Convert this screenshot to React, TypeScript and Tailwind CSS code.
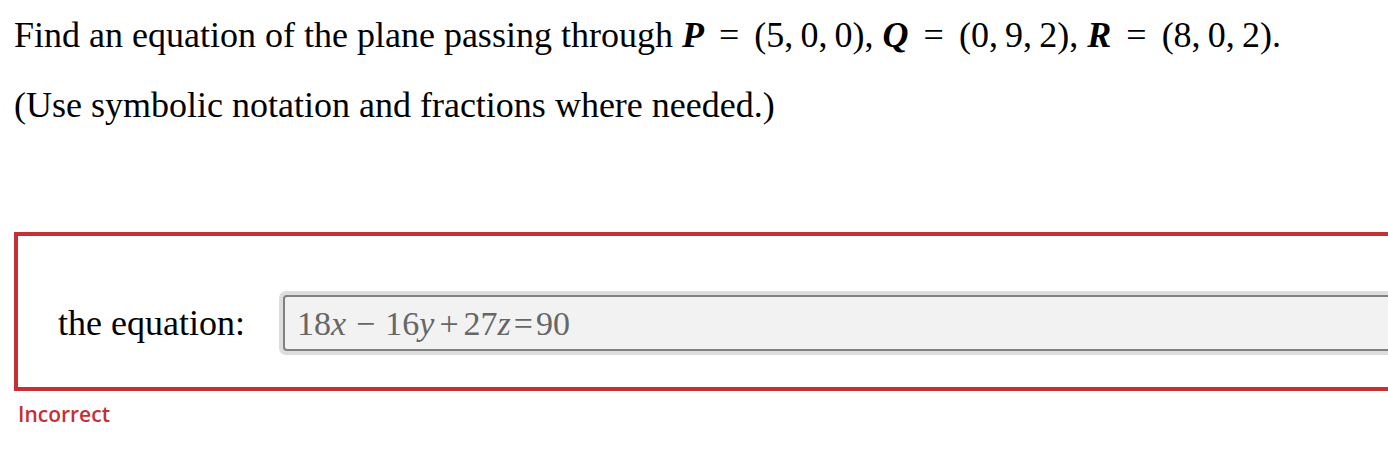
import React from 'react';

const serif = { fontFamily: '"Liberation Serif", "Times New Roman", serif' };

const Pt = ({ name, coords }: { name: string; coords: string }) => (
  <span className="whitespace-nowrap">
    <span className="italic font-bold">{name}</span>
    <span className="mx-[15px]">=</span>
    {coords}
  </span>
);

export default function App() {
  return (
    <div className="w-full overflow-hidden bg-white text-black" style={serif}>
      <div className="pl-[14px] pt-[15px]">
        <p className="text-[36px] leading-[40px] whitespace-nowrap">
          Find an equation of the plane passing through <Pt name="P" coords="(5,&#8201;0,&#8201;0)" />,{' '}
          <Pt name="Q" coords="(0,&#8201;9,&#8201;2)" />, <Pt name="R" coords="(8,&#8201;0,&#8201;2)" />.
        </p>
        <p className="mt-[30px] text-[36px] leading-[40px]">(Use symbolic notation and fractions where needed.)</p>

        {/* answer box */}
        <div className="mt-[107px] w-[1420px] h-[159px] border-4 border-[#c43034] pl-[40px] pt-[55px]">
          <div className="flex items-center">
            <span className="text-[36px] leading-[40px] w-[221px] shrink-0">the equation:</span>
            <div className="flex-1 p-[4px] bg-[#dddddd] rounded-[7px]">
              <div className="h-[56px] border-2 border-[#808080] rounded-[4px] bg-[#f2f2f2] flex items-center pl-[12px] text-[34px] text-[#666666]">
                <span>18<i>x</i></span>
                <span className="mx-[10px]">&minus;</span>
                <span>16<i>y</i></span>
                <span className="mx-[5px]">+</span>
                <span>27<i>z</i></span>
                <span className="mx-[3px]">=</span>
                <span>90</span>
              </div>
            </div>
          </div>
        </div>

        <div
          className="mt-[8px] pl-[4px] text-[21px] font-semibold text-[#c43034]"
          style={{ fontFamily: '"Open Sans", "Noto Sans", sans-serif' }}
        >
          Incorrect
        </div>
      </div>
    </div>
  );
}
